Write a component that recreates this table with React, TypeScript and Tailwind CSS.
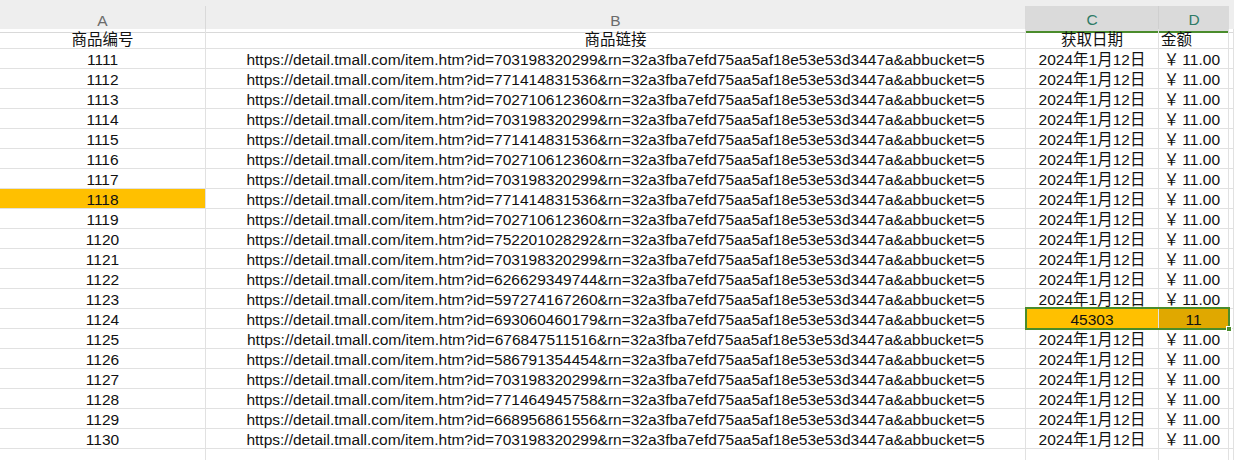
const rows = [
  ["1111", "703198320299"],
  ["1112", "771414831536"],
  ["1113", "702710612360"],
  ["1114", "703198320299"],
  ["1115", "771414831536"],
  ["1116", "702710612360"],
  ["1117", "703198320299"],
  ["1118", "771414831536"],
  ["1119", "702710612360"],
  ["1120", "752201028292"],
  ["1121", "703198320299"],
  ["1122", "626629349744"],
  ["1123", "597274167260"],
  ["1124", "693060460179"],
  ["1125", "676847511516"],
  ["1126", "586791354454"],
  ["1127", "703198320299"],
  ["1128", "771464945758"],
  ["1129", "668956861556"],
  ["1130", "703198320299"],
]

const cols = "grid grid-cols-[206px_820px_133px_70px_1fr]"
const cell = "h-[20px] pt-[3px] border-r border-b border-[#e1e1e1] flex items-center leading-none whitespace-nowrap overflow-hidden"

export default function App() {
  return (
    <div
      className="w-[1234px] h-[460px] overflow-hidden bg-white text-[15.5px] text-[#111]"
      style={{ fontFamily: '"Liberation Sans", "Noto Sans CJK SC", sans-serif' }}
    >
      {/* column letters */}
      <div className="bg-[#eeeeee] pt-[6px]">
        <div className={`${cols} h-[23px] text-[#6b6b6b]`}>
          <div className="pt-[2px] border-r border-b border-[#d9d9d9] flex items-center justify-center">A</div>
          <div className="pt-[2px] border-r border-b border-[#d9d9d9] flex items-center justify-center">B</div>
          <div className="pt-[2px] bg-[#dadada] border-r border-[#cfcfcf] border-b-2 border-b-[#4a8c2c] flex items-center justify-center text-[#2f7a66]">C</div>
          <div className="pt-[2px] bg-[#dadada] border-b-2 border-[#4a8c2c] flex items-center justify-center text-[#2f7a66]">D</div>
          <div className="border-b border-[#d9d9d9]" />
        </div>
      </div>

      {/* title row */}
      <div className={cols}>
        <div className={`${cell} justify-center`}>商品编号</div>
        <div className={`${cell} justify-center`}>商品链接</div>
        <div className={`${cell} justify-center`}>获取日期</div>
        <div className={`${cell} pl-[2px]`}>金额</div>
        <div className={cell} />
      </div>

      {rows.map(([code, id]) => {
        const picked = code === "1124"
        return (
          <div key={code} className={`${cols} relative`}>
            <div className={`${cell} justify-center ${code === "1118" ? "bg-[#ffc000]" : ""}`}>{code}</div>
            <div className={`${cell} justify-center`}>
              https://detail.tmall.com/item.htm?id={id}&amp;rn=32a3fba7efd75aa5af18e53e53d3447a&amp;abbucket=5
            </div>
            {picked ? (
              <>
                <div className={`${cell} justify-center bg-[#ffc000]`}>45303</div>
                <div className={`${cell} justify-center bg-[#e0a800]`}>11</div>
              </>
            ) : (
              <>
                <div className={`${cell} justify-center`}>2024年1月12日</div>
                <div className={`${cell} justify-end pr-[8px] gap-[3px]`}>
                  <span>￥</span>
                  <span>11.00</span>
                </div>
              </>
            )}
            <div className={cell} />
            {picked && (
              <div className="absolute z-10 left-[1025px] top-[-2px] w-[205px] h-[23px] border-2 border-[#4a8c2c] pointer-events-none">
                <div className="absolute right-[-4px] bottom-[-4px] w-[6px] h-[6px] bg-[#4a8c2c] border border-white" />
              </div>
            )}
          </div>
        )
      })}

      <div className={cols}>
        <div className={cell} />
        <div className={cell} />
        <div className={cell} />
        <div className={cell} />
        <div className={cell} />
      </div>
    </div>
  )
}
